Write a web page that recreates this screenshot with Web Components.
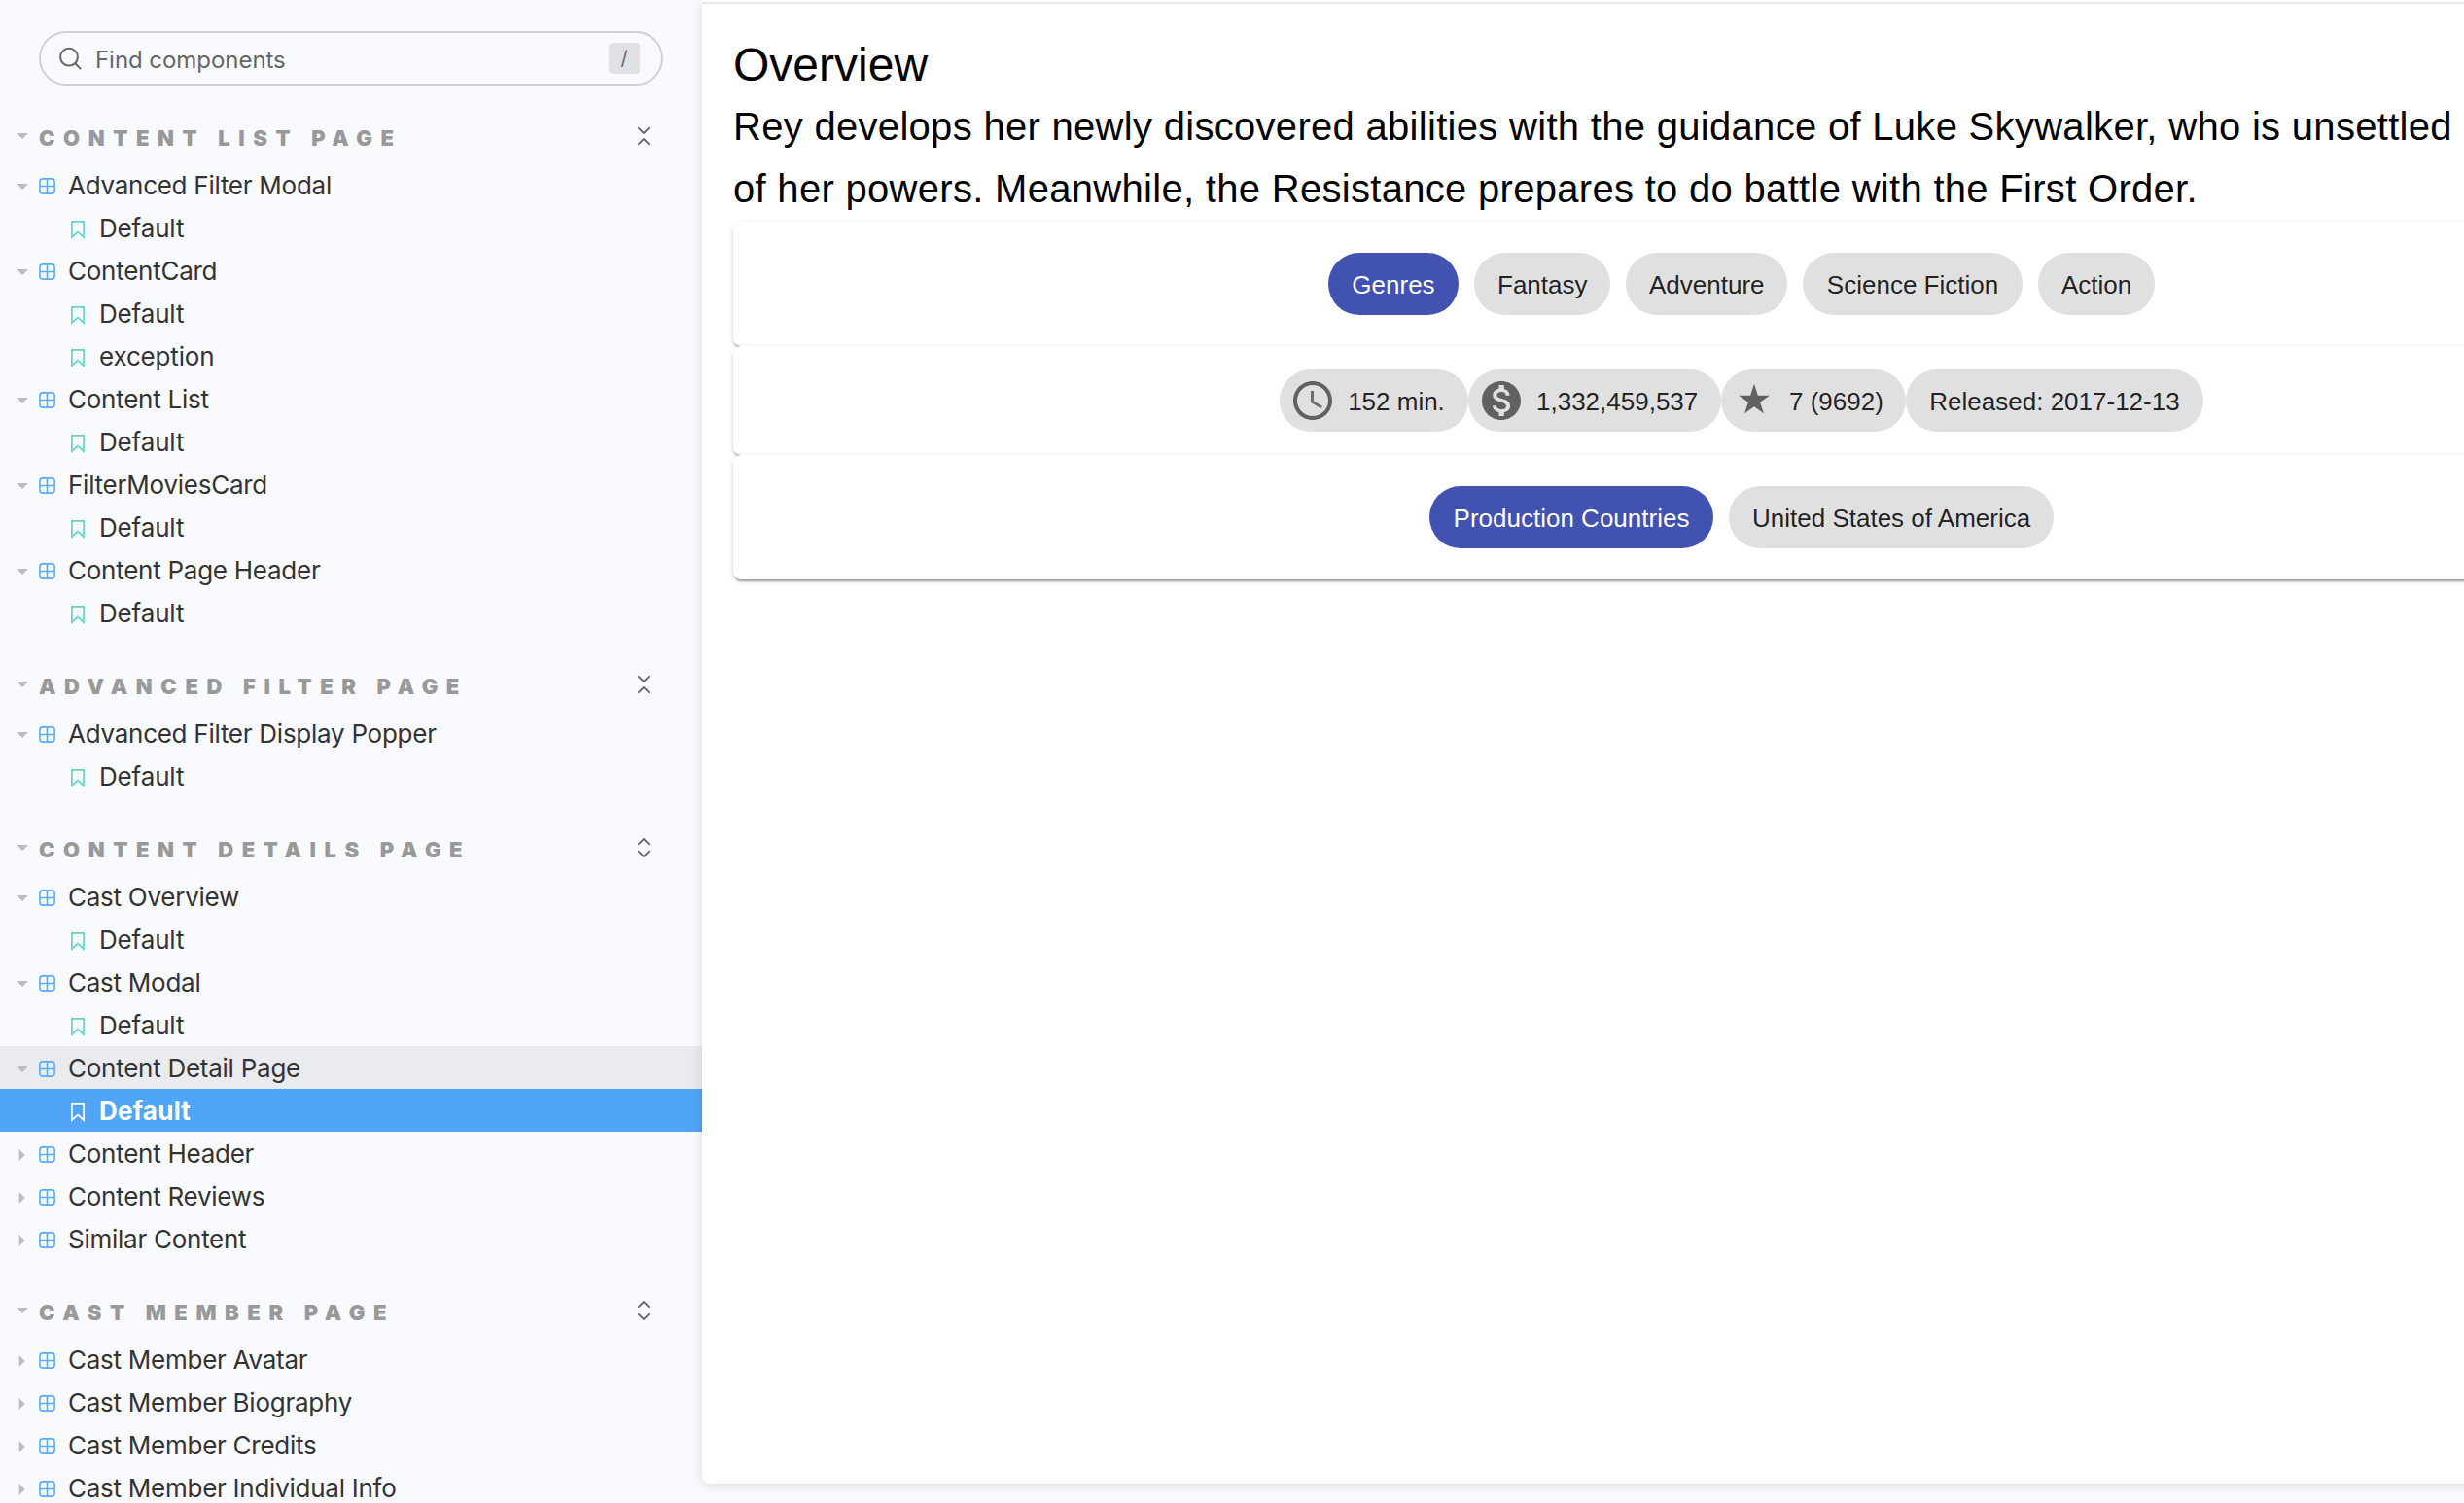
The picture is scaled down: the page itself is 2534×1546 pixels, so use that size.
<!DOCTYPE html>
<html lang="en">
<head>
<meta charset="utf-8">
<title>Content Detail Page - Default</title>
<style>
html, body { margin: 0; height: 100%; overflow: hidden; background: #f8fafe; }
</style>
</head>
<body>
<explorer-app></explorer-app>
<script>
function define(name, markup, setup) {
  const template = document.createElement('template');
  template.innerHTML = markup;
  customElements.define(name, class extends HTMLElement {
    constructor() {
      super();
      this.attachShadow({ mode: 'open' }).append(template.content.cloneNode(true));
    }
    connectedCallback() { if (setup) setup(this, this.shadowRoot); }
  });
}

define('search-field', `
<style>
:host { display: flex; align-items: center; box-sizing: border-box; height: 56px; margin: 32px 40px 0; padding: 0 22px 0 18px;
  border: 2px solid #d0d1d4; border-radius: 28px; color: #666; font-size: 24px; }
svg { width: 24px; height: 24px; flex: none; margin-right: 14px; }
.label { flex: 1; padding-top: 3px; line-height: 30px; letter-spacing: -.05px; }
kbd { width: 32px; height: 32px; border-radius: 4px; background: #e0e1e4; font: 20px/33px Inter, sans-serif; text-align: center; }
</style>
<svg viewBox="0 0 24 24" fill="none" stroke="#666" stroke-width="2" stroke-linecap="round"><circle cx="11" cy="10.7" r="8.9"/><path d="M17.4 17.2L22.6 22.6"/></svg>
<span class="label"><slot></slot></span><kbd>/</kbd>`);

define('section-header', `
<style>
:host { display: flex; align-items: center; box-sizing: border-box; height: 80px; padding: 40px 50px 16px 17px; color: #999; }
.caret { width: 12px; height: 6px; margin-right: 11px; }
.text { flex: 1; padding-top: 4px; font-size: 22px; line-height: 24px; font-weight: 900; letter-spacing: 8.6px; white-space: nowrap; }
.toggle { width: 20px; height: 24px; }
.open { display: none; }
:host([expand]) .open { display: inline; }
:host([expand]) .shut { display: none; }
</style>
<svg class="caret" viewBox="0 0 12 6"><path d="M0 0H12L6 6Z" fill="#bcbdbf"/></svg>
<span class="text"><slot></slot></span>
<svg class="toggle" viewBox="0 0 20 24" fill="none" stroke="#666" stroke-width="1.8" stroke-linecap="round" stroke-linejoin="round">
<path class="shut" d="M4.8 3.8L10 9L15.2 3.8M4.8 20.2L10 15L15.2 20.2"/>
<path class="open" d="M4.8 8.2L10 3L15.2 8.2M4.8 15.8L10 21L15.2 15.8"/></svg>`);

define('component-row', `
<style>
:host { display: flex; align-items: center; height: 44px; padding-left: 17px; color: #333; font-size: 26px; letter-spacing: -.26px; }
:host([hover]) { background: #eaebef; }
.caret { width: 12px; height: 12px; margin: 4px 11px 0 0; }
.grid { width: 17px; height: 17px; margin: 3px 13.5px 0 -.5px; }
.text { line-height: 42px; padding-top: 2px; white-space: nowrap; }
.right { display: none; }
:host([closed]) .right { display: inline; }
:host([closed]) .down { display: none; }
</style>
<svg class="caret" viewBox="0 0 12 12" fill="#bcbdbf"><path class="down" d="M0 3H12L6 9Z"/><path class="right" d="M2.7 0V12L8.7 6Z"/></svg>
<svg class="grid" viewBox="0 0 17 17" fill="none" stroke="#5cacfb" stroke-width="1.6"><rect x=".9" y=".9" width="15.2" height="15.2" rx="3"/><path d="M8.5 1V16M1 8.5H16"/></svg>
<span class="text"><slot></slot></span>`);

define('story-row', `
<style>
:host { display: flex; align-items: center; height: 44px; padding-left: 73px; color: #333; font-size: 26px; letter-spacing: -.15px; --mark: #66d4d2; }
:host([selected]) { background: #51a5f7; color: #fff; font-weight: 700; letter-spacing: .25px; --mark: #fff; }
svg { width: 14px; height: 19px; margin: 5px 15px 0 0; stroke: var(--mark); }
.text { line-height: 42px; padding-top: 2px; }
</style>
<svg viewBox="0 0 14 19" fill="none" stroke-width="1.7"><path d="M.9 .9H13.1V17L7 11.6L.9 17Z"/></svg>
<span class="text"><slot></slot></span>`);

define('explorer-sidebar', `
<style>:host { display: flex; flex-direction: column; width: 722px; flex: none; font-family: Inter, sans-serif; } ::slotted(*) { flex: none; }</style>
<slot></slot>`);

const ICONS = {
  clock: '<svg viewBox="0 0 24 24"><path d="M11.99 2C6.47 2 2 6.48 2 12s4.47 10 9.99 10C17.52 22 22 17.52 22 12S17.52 2 11.99 2zM12 20c-4.42 0-8-3.58-8-8s3.58-8 8-8 8 3.58 8 8-3.58 8-8 8z"/><path opacity=".9" d="M12.5 7H11v6l5.25 3.15.75-1.23-4.5-2.67z"/></svg>',
  money: '<svg viewBox="0 0 24 24"><path d="M12 2C6.48 2 2 6.48 2 12s4.48 10 10 10 10-4.48 10-10S17.52 2 12 2zm1.41 16.09V20h-2.67v-1.93c-1.71-.36-3.16-1.46-3.27-3.4h1.96c.1 1.05.82 1.87 2.65 1.87 1.96 0 2.4-.98 2.4-1.59 0-.83-.44-1.61-2.67-2.14-2.48-.6-4.18-1.62-4.18-3.67 0-1.72 1.39-2.84 3.11-3.21V4h2.67v1.95c1.86.45 2.79 1.86 2.85 3.39H14.3c-.05-1.11-.64-1.87-2.22-1.87-1.5 0-2.4.68-2.4 1.64 0 .84.65 1.39 2.67 1.91s4.18 1.39 4.18 3.91c-.02 1.83-1.38 2.83-3.12 3.16z"/></svg>',
  star: '<svg viewBox="0 0 18 18"><path d="M9 11.3l3.71 2.7-1.42-4.36L15 7h-4.55L9 2.5 7.55 7H3l3.71 2.64L5.29 14z"/></svg>'
};
define('info-chip', `
<style>
:host { display: flex; align-items: center; box-sizing: border-box; height: 64px; border-radius: 32px; background: #e0e0e0; color: rgba(0,0,0,.87); font-size: 26px; }
:host([primary]) { background: #4152b0; color: #fff; }
.icon svg { display: block; width: 48px; height: 48px; margin: 0 -12px 0 10px; fill: #616161; }
.label { flex: 1; padding: 2px 0 0; text-align: center; line-height: 30px; white-space: nowrap; margin: 0 24px; }
</style>
<span class="icon"></span><span class="label"><slot></slot></span>`, (el, root) => {
  if (el.hasAttribute('width')) el.style.width = el.getAttribute('width') + 'px';
  root.querySelector('.icon').innerHTML = ICONS[el.getAttribute('icon')] || '';
});

define('chip-paper', `
<style>
:host { display: flex; justify-content: center; gap: 16px; padding: 32px 0; border-radius: 8px; background: #fff;
  box-shadow: 0 4px 2px -2px rgba(0,0,0,.2), 0 2px 2px 0 rgba(0,0,0,.14), 0 2px 6px 0 rgba(0,0,0,.12); position: relative; }
:host([dense]) { padding: 24px 0; gap: 0; }
</style><slot></slot>`);

define('preview-panel', `
<style>
:host { display: block; position: relative; flex: none; box-sizing: border-box; width: 2138px; height: 1526px; padding-top: 2px; background: #fff;
  border-radius: 0 0 8px 8px; box-shadow: 0 2px 10px rgba(0,0,0,.1), 0 0 24px rgba(0,0,0,.035); font-family: "Liberation Sans", Arial, sans-serif; color: #000; }
.body { border-top: 2px solid #e4e4e4; padding: 32px 32px 0; }
h1 { margin: 0; font-size: 48px; line-height: 62px; font-weight: 400; }
p { margin: 0; padding-bottom: 2px; font-size: 40px; line-height: 64px; letter-spacing: .3px; white-space: nowrap; }
</style>
<div class="body"><h1><slot name="title"></slot></h1><p><slot name="text"></slot></p><slot></slot></div>`);

define('explorer-app', `
<style>:host { display: flex; align-items: flex-start; width: 100vw; height: 100vh; overflow: hidden; }</style>
<explorer-sidebar>
<search-field>Find components</search-field>
<section-header>CONTENT LIST PAGE</section-header>
<component-row>Advanced Filter Modal</component-row><story-row>Default</story-row>
<component-row>ContentCard</component-row><story-row>Default</story-row><story-row>exception</story-row>
<component-row>Content List</component-row><story-row>Default</story-row>
<component-row>FilterMoviesCard</component-row><story-row>Default</story-row>
<component-row>Content Page Header</component-row><story-row>Default</story-row>
<section-header>ADVANCED FILTER PAGE</section-header>
<component-row>Advanced Filter Display Popper</component-row><story-row>Default</story-row>
<section-header expand>CONTENT DETAILS PAGE</section-header>
<component-row>Cast Overview</component-row><story-row>Default</story-row>
<component-row>Cast Modal</component-row><story-row>Default</story-row>
<component-row hover>Content Detail Page</component-row><story-row selected>Default</story-row>
<component-row closed>Content Header</component-row>
<component-row closed>Content Reviews</component-row>
<component-row closed>Similar Content</component-row>
<section-header expand>CAST MEMBER PAGE</section-header>
<component-row closed>Cast Member Avatar</component-row>
<component-row closed>Cast Member Biography</component-row>
<component-row closed>Cast Member Credits</component-row>
<component-row closed>Cast Member Individual Info</component-row>
</explorer-sidebar>
<preview-panel>
<span slot="title">Overview</span>
<span slot="text">Rey develops her newly discovered abilities with the guidance of Luke Skywalker, who is unsettled<br>of her powers. Meanwhile, the Resistance prepares to do battle with the First Order.</span>
<chip-paper><info-chip primary width="134">Genres</info-chip><info-chip width="140">Fantasy</info-chip><info-chip width="166">Adventure</info-chip><info-chip width="226">Science Fiction</info-chip><info-chip width="120">Action</info-chip></chip-paper>
<chip-paper dense><info-chip icon="clock" width="194">152 min.</info-chip><info-chip icon="money" width="260">1,332,459,537</info-chip><info-chip icon="star" width="190">7 (9692)</info-chip><info-chip width="306">Released: 2017-12-13</info-chip></chip-paper>
<chip-paper><info-chip primary width="292">Production Countries</info-chip><info-chip width="334">United States of America</info-chip></chip-paper>
</preview-panel>`);
</script>
</body>
</html>
